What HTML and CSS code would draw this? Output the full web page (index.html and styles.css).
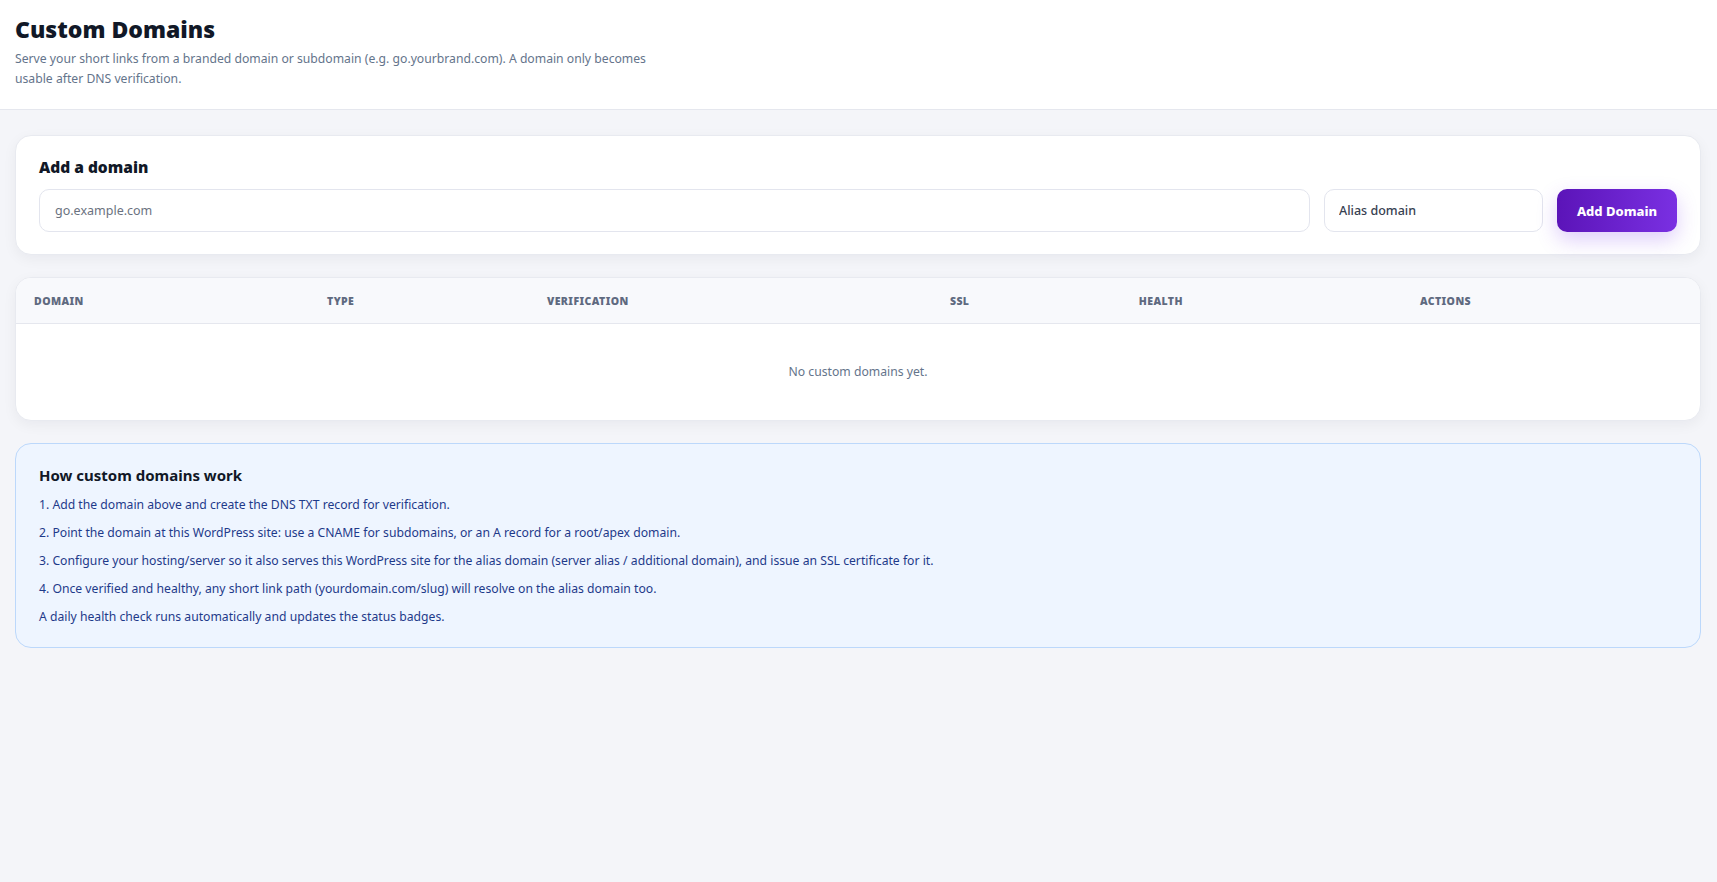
FILE: index.html
```html
<!DOCTYPE html>
<html lang="en">
  <head>
    <meta charset="UTF-8" />
    <meta name="viewport" content="width=device-width, initial-scale=1.0" />
    <title>Custom Domains</title>
    <link rel="stylesheet" href="styles.css">
  </head>
  <body>
    <header class="page-head">
      <h1>Custom Domains</h1>
      <p class="lead">Serve your short links from a branded domain or subdomain (e.g. go.yourbrand.com). A domain only becomes usable after DNS verification.</p>
    </header>

    <main class="content">
      <section class="card add-card">
        <h2>Add a domain</h2>
        <form class="add-form" onsubmit="return false;">
          <input type="text" class="field domain-field" placeholder="go.example.com" />
          <select class="field type-field">
            <option>Alias domain</option>
          </select>
          <button type="submit" class="btn-add">Add Domain</button>
        </form>
      </section>

      <section class="card table-card">
        <table class="domains">
          <colgroup>
            <col class="c-domain" />
            <col class="c-type" />
            <col class="c-verify" />
            <col class="c-ssl" />
            <col class="c-health" />
            <col class="c-actions" />
          </colgroup>
          <thead>
            <tr>
              <th>Domain</th>
              <th>Type</th>
              <th>Verification</th>
              <th>SSL</th>
              <th>Health</th>
              <th>Actions</th>
            </tr>
          </thead>
          <tbody>
            <tr>
              <td colspan="6" class="empty">No custom domains yet.</td>
            </tr>
          </tbody>
        </table>
      </section>

      <section class="info">
        <h3>How custom domains work</h3>
        <p>1. Add the domain above and create the DNS TXT record for verification.</p>
        <p>2. Point the domain at this WordPress site: use a CNAME for subdomains, or an A record for a root/apex domain.</p>
        <p>3. Configure your hosting/server so it also serves this WordPress site for the alias domain (server alias / additional domain), and issue an SSL certificate for it.</p>
        <p>4. Once verified and healthy, any short link path (yourdomain.com/slug) will resolve on the alias domain too.</p>
        <p>A daily health check runs automatically and updates the status badges.</p>
      </section>
    </main>
  </body>
</html>
```

FILE: styles.css
```css
body {
  margin: 0;
  font-family: "Noto Sans", "Open Sans", sans-serif;
  background: #f4f5f9;
  color: #111827;
}

.page-head {
  background: #fff;
  border-bottom: 1px solid #e5e7ee;
  padding: 16px 15px 20px;
}
.page-head h1 {
  margin: 0 0 7px;
  font-size: 23px;
  line-height: 26px;
  font-weight: 900;
  color: #111827;
}
.lead {
  margin: 0;
  max-width: 660px;
  font-size: 12.2px;
  line-height: 20px;
  color: #64748b;
}

.content {
  padding: 25px 16px 40px 15px;
  display: flex;
  flex-direction: column;
  gap: 22px;
}

.card {
  background: #fff;
  border: 1px solid #e8eaf0;
  border-radius: 16px;
  box-shadow: 0 4px 14px rgba(15, 23, 42, 0.05);
}

.add-card {
  padding: 21px 23px 22px;
}
.add-card h2 {
  margin: 0 0 12px;
  font-size: 15.5px;
  line-height: 20px;
  font-weight: 900;
  color: #111827;
}
.add-form {
  display: flex;
  gap: 14px;
}
.field {
  height: 43px;
  box-sizing: border-box;
  border: 1px solid #e3e5ee;
  border-radius: 10px;
  background: #fff;
  padding: 0 14px;
  font-family: inherit;
  font-size: 12.5px;
  color: #374151;
  outline: none;
}
.domain-field {
  flex: 1;
  padding-left: 15px;
}
.domain-field::placeholder {
  color: #6b7280;
}
.type-field {
  width: 219px;
  appearance: none;
  -webkit-appearance: none;
  font-weight: 500;
}
.btn-add {
  width: 120px;
  height: 43px;
  border: none;
  border-radius: 10px;
  background: linear-gradient(90deg, #5b14b8, #7a30e2);
  color: #fff;
  font-family: inherit;
  font-size: 13px;
  font-weight: 800;
  box-shadow: 0 8px 20px rgba(124, 58, 237, 0.25);
  cursor: pointer;
}

.table-card {
  overflow: hidden;
}
.domains {
  width: 100%;
  border-collapse: collapse;
  table-layout: fixed;
}
.c-domain { width: 17.4%; }
.c-type { width: 13.06%; }
.c-verify { width: 23.93%; }
.c-ssl { width: 11.22%; }
.c-health { width: 16.69%; }
.domains th {
  background: #f8f9fc;
  border-bottom: 1px solid #e5e7ee;
  height: 45px;
  padding: 0 18px;
  text-align: left;
  font-size: 10.5px;
  font-weight: 900;
  letter-spacing: 0.04em;
  text-transform: uppercase;
  color: #5f6a80;
}
.domains .empty {
  padding: 38px 18px 39px;
  text-align: center;
  font-size: 12.2px;
  line-height: 19px;
  color: #64748b;
}

.info {
  background: #eef5ff;
  border: 1px solid #bcd8fb;
  border-radius: 16px;
  padding: 22px 23px 20px;
}
.info h3 {
  margin: 0 0 11px;
  font-size: 15px;
  line-height: 18px;
  font-weight: 700;
  color: #111827;
}
.info p {
  margin: 0 0 8px;
  font-size: 12.2px;
  line-height: 20px;
  color: #1e3a8a;
}
.info p:last-child {
  margin-bottom: 0;
}
```
